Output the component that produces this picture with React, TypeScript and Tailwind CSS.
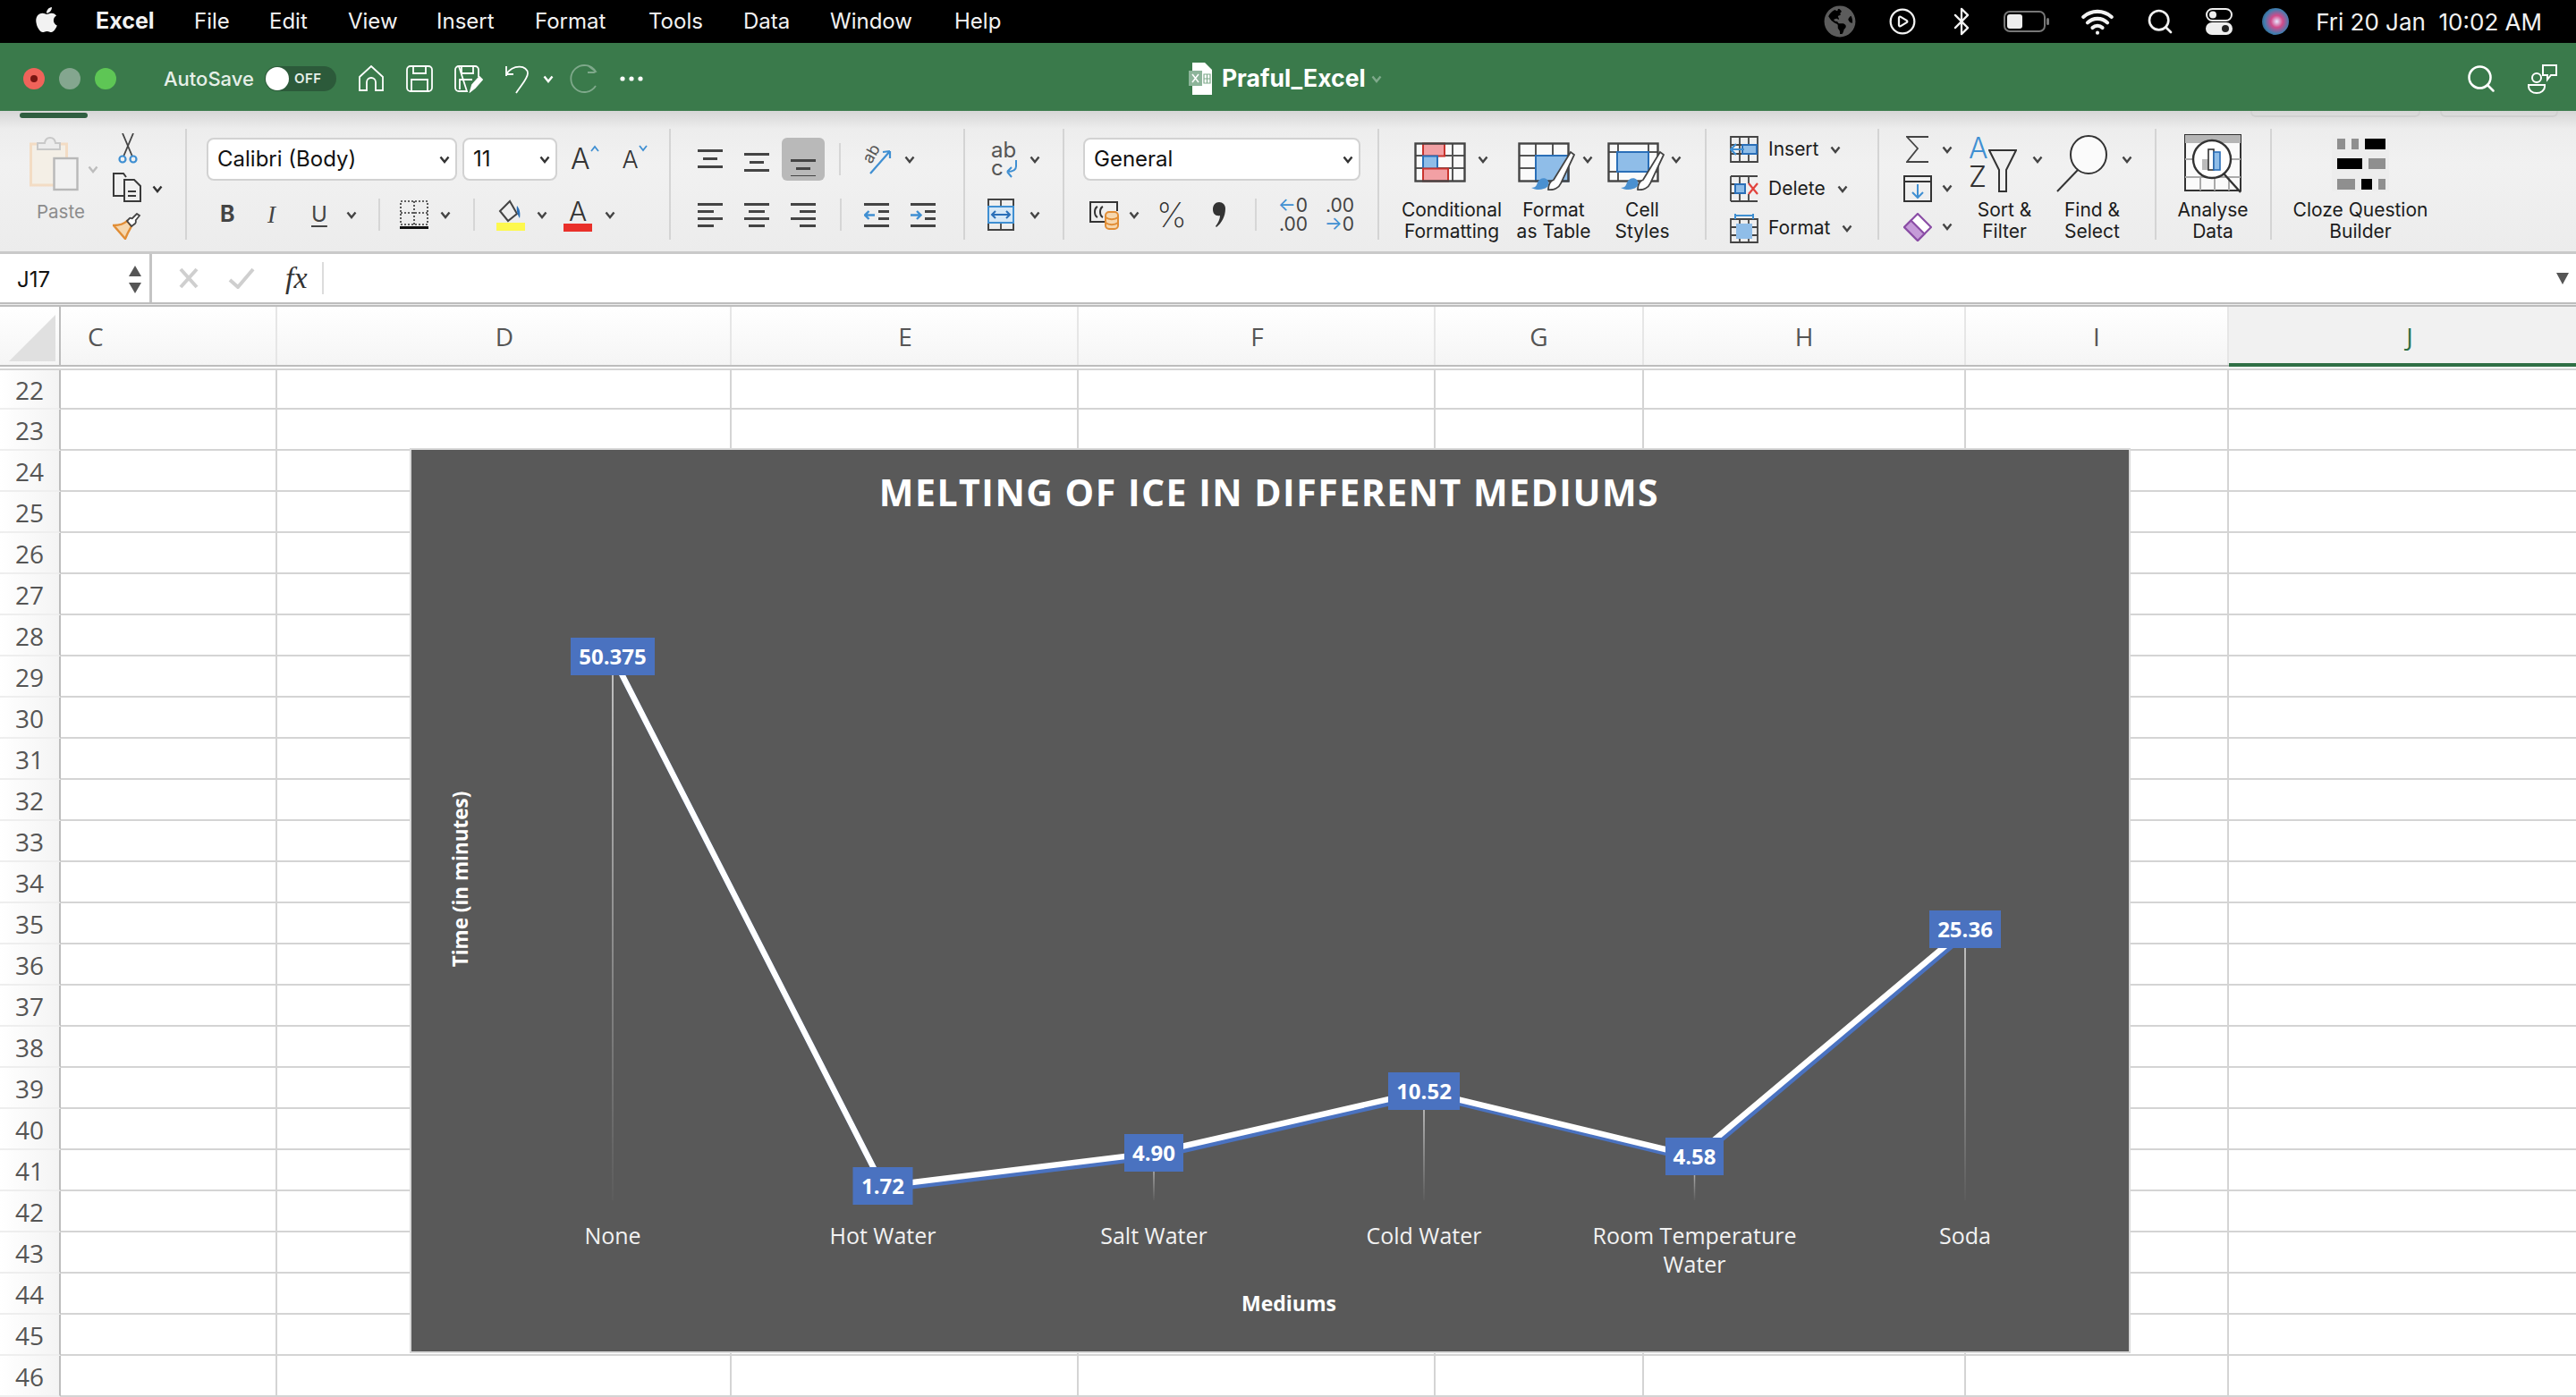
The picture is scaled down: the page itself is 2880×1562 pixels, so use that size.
import React from "react";
import { FaApple, FaGlobeAmericas } from "react-icons/fa";
import { Bluetooth, CirclePlay, Search, Wifi } from "lucide-react";

const menuItems = [
  { label: "File", width: "w-[84px]" },
  { label: "Edit", width: "w-[88px]" },
  { label: "View", width: "w-[99px]" },
  { label: "Insert", width: "w-[110px]" },
  { label: "Format", width: "w-[127px]" },
  { label: "Tools", width: "w-[106px]" },
  { label: "Data", width: "w-[97px]" },
  { label: "Window", width: "w-[139px]" },
  { label: "Help", width: "w-[60px]" },
];

const columns = [
  { label: "C", width: "w-[242px]", text: "pl-[30px] text-left" },
  { label: "D", width: "w-[508px]", text: "pl-[2px] text-center" },
  { label: "E", width: "w-[388px]", text: "pl-[2px] text-center" },
  { label: "F", width: "w-[399px]", text: "pl-[2px] text-center" },
  { label: "G", width: "w-[233px]", text: "text-center" },
  { label: "H", width: "w-[360px]", text: "text-center" },
  { label: "I", width: "w-[294px]", text: "text-center" },
];

const rows = Array.from({ length: 25 }, (_, i) => 22 + i);

const points = [
  { x: 685, y: 734, w: 94, value: "50.375", name: ["None"] },
  { x: 987, y: 1326, w: 67, value: "1.72", name: ["Hot Water"] },
  { x: 1290, y: 1289, w: 66, value: "4.90", name: ["Salt Water"] },
  { x: 1592, y: 1220, w: 80, value: "10.52", name: ["Cold Water"] },
  { x: 1894.5, y: 1293, w: 65, value: "4.58", name: ["Room Temperature", "Water"] },
  { x: 2197, y: 1039, w: 80, value: "25.36", name: ["Soda"] },
];

const chartFont = "'Open Sans', sans-serif";

function Chevron({ className = "", color = "#444444" }: { className?: string; color?: string }) {
  return (
    <svg width="12" height="9" viewBox="0 0 12 9" className={`shrink-0 ${className}`}>
      <path d="M1.5 1.5 6 7l4.5-5.5" fill="none" stroke={color} strokeWidth="2.4" />
    </svg>
  );
}

function Sep({ className = "" }: { className?: string }) {
  return <div className={`h-[36px] w-[2px] shrink-0 bg-[#d6d6d6] ${className}`} />;
}

function Lines({ rows, className = "" }: { rows: [number, number][]; className?: string }) {
  return (
    <svg width="28" height="28" viewBox="0 0 28 28" className={`shrink-0 ${className}`}>
      {rows.map(([x, y], i) => (
        <rect key={i} x={x} y={y} width={28 - x * 2 > 10 ? 28 - x * 2 : 16} height="3" fill="#444" />
      ))}
    </svg>
  );
}

function AlignH({ side, className = "" }: { side: "l" | "c" | "r"; className?: string }) {
  const short = side === "l" ? 0 : side === "c" ? 5 : 10;
  return (
    <svg width="28" height="28" viewBox="0 0 28 28" className={`shrink-0 ${className}`}>
      <rect y="1" width="28" height="3" fill="#444" />
      <rect x={short} y="9" width="18" height="3" fill="#444" />
      <rect y="17" width="28" height="3" fill="#444" />
      <rect x={short} y="25" width="18" height="3" fill="#444" />
    </svg>
  );
}

function Indent({ right, className = "" }: { right?: boolean; className?: string }) {
  return (
    <svg width="28" height="28" viewBox="0 0 28 28" className={`shrink-0 ${className}`}>
      <rect y="1" width="28" height="3" fill="#444" />
      <rect x="16" y="9" width="12" height="3" fill="#444" />
      <rect x="16" y="17" width="12" height="3" fill="#444" />
      <rect y="25" width="28" height="3" fill="#444" />
      {right ? (
        <path d="M0 14.500h11M7 10l4.500 4.500L7 19" fill="none" stroke="#3f8fd2" strokeWidth="2.4" />
      ) : (
        <path d="M12 14.500H1M5.500 10 1 14.500 5.500 19" fill="none" stroke="#3f8fd2" strokeWidth="2.4" />
      )}
    </svg>
  );
}

function MenuBar() {
  return (
    <div className="flex h-[48px] items-center bg-black font-['Inter',sans-serif] text-[24px] text-[#f2f2f2]">
      <FaApple className="ml-[38px] h-[32px] w-[28px] -translate-y-[2px]" />
      <span className="ml-[41px] w-[110px] text-[25px] font-bold">Excel</span>
      {menuItems.map((m) => (
        <span key={m.label} className={m.width}>
          {m.label}
        </span>
      ))}
      <div className="ml-auto flex items-center">
        <FaGlobeAmericas className="h-[36px] w-[36px] text-[#5c5c5c]" />
        <CirclePlay className="ml-[36px] h-[32px] w-[32px]" strokeWidth={1.7} />
        <Bluetooth className="ml-[33px] h-[34px] w-[34px]" strokeWidth={1.6} />
        <svg width="52" height="24" viewBox="0 0 52 24" className="ml-[30px]">
          <rect x="1" y="1" width="45" height="22" rx="6" fill="none" stroke="#777" strokeWidth="2" />
          <rect x="4" y="4" width="17" height="16" rx="3" fill="#eee" />
          <rect x="48" y="8" width="3" height="8" rx="1.500" fill="#777" />
        </svg>
        <Wifi className="ml-[34px] h-[38px] w-[38px]" strokeWidth={2.6} />
        <Search className="ml-[35px] h-[32px] w-[32px]" strokeWidth={2} />
        <svg width="30" height="30" viewBox="0 0 30 30" className="ml-[35px]">
          <rect x="1" y="1" width="28" height="13" rx="6.500" fill="none" stroke="#eee" strokeWidth="2" />
          <circle cx="8" cy="7.500" r="4" fill="#eee" />
          <rect x="0" y="16" width="30" height="14" rx="7" fill="#eee" />
          <circle cx="22" cy="23" r="4" fill="#222" />
        </svg>
        <div className="ml-[33px] h-[30px] w-[30px] rounded-full bg-[radial-gradient(circle_at_55%_50%,#e8e8ff_0%,#d04a8a_30%,#3f7fb0_62%,#222233_100%)]" />
        <span className="ml-[30px] mr-[38px] whitespace-pre text-[26px]">Fri 20 Jan  10:02 AM</span>
      </div>
    </div>
  );
}

function TitleBar() {
  return (
    <div className="flex h-[76px] items-center bg-[#3a7a4b] pt-[4px] font-['Inter',sans-serif] text-white">
      <div className="relative ml-[26px] flex h-[24px] w-[24px] items-center justify-center rounded-full bg-[#f0635a]">
        <div className="h-[8px] w-[8px] rounded-full bg-[#7a1512]" />
      </div>
      <div className="ml-[16px] h-[24px] w-[24px] rounded-full bg-[#84a68f]" />
      <div className="ml-[16px] h-[24px] w-[24px] rounded-full bg-[#5ec655]" />
      <span className="ml-[53px] text-[22px] font-medium text-[#e6efe8]">AutoSave</span>
      <div className="ml-[12px] flex h-[28px] w-[80px] items-center rounded-full bg-[#2c5a3a] pl-[1px]">
        <div className="h-[26px] w-[26px] rounded-full bg-white" />
        <span className="ml-[6px] text-[15px] font-semibold tracking-[0.5px] text-[#e6efe8]">OFF</span>
      </div>
      <svg width="30" height="30" viewBox="0 0 30 30" className="ml-[24px]" fill="none" stroke="#fff" strokeWidth="1.800">
        <path d="M2 13 15 1l13 12v15h-8v-9a5 5 0 0 0-10 0v9H2z" />
      </svg>
      <svg width="30" height="30" viewBox="0 0 30 30" className="ml-[24px]" fill="none" stroke="#fff" strokeWidth="1.800">
        <path d="M5 1h20a4 4 0 0 1 4 4v20a4 4 0 0 1-4 4H5a4 4 0 0 1-4-4V5a4 4 0 0 1 4-4z" />
        <path d="M8 1v8h14V1M6 29V16h18v13" />
      </svg>
      <svg width="32" height="32" viewBox="0 0 32 32" className="ml-[24px]" fill="none" stroke="#fff" strokeWidth="1.800">
        <path d="M5 2h18a4 4 0 0 1 4 4v8M14 30H5a4 4 0 0 1-4-4V6a4 4 0 0 1 4-4z" />
        <path d="M8 2v8h13V2M6 28V17h14" />
        <path d="M18 30l2-7 8-9 3 3-8 9z" fill="#fff" />
      </svg>
      <svg width="28" height="34" viewBox="0 0 28 34" className="ml-[24px]" fill="none" stroke="#fff" strokeWidth="1.800">
        <path d="M2 14V3M2 12h8M2 12C10 0 26 2 26 11c0 6-8 14-13 22" />
      </svg>
      <Chevron className="ml-[15px]" color="#ffffff" />
      <svg width="32" height="34" viewBox="0 0 32 34" className="ml-[17px]" fill="none" stroke="#7fa98b" strokeWidth="1.800">
        <path d="M30 9A15 15 0 1 0 30 25M21 2l9 7-2 1h-7" />
      </svg>
      <svg width="26" height="6" viewBox="0 0 26 6" className="ml-[25px]" fill="#fff">
        <circle cx="3" cy="3" r="2.600" />
        <circle cx="13" cy="3" r="2.600" />
        <circle cx="23" cy="3" r="2.600" />
      </svg>
      <div className="ml-[610px] flex items-center">
        <svg width="26" height="36" viewBox="0 0 26 36">
          <path d="M4 0h14l8 8v28H4z" fill="#fff" />
          <rect x="0" y="9" width="15" height="17" fill="#8db49a" />
          <path d="M4 13l7 9m0-9-7 9" stroke="#fff" strokeWidth="1.500" />
          <path d="M17 13h7v10h-7zM20.500 13v10M17 18h7" fill="none" stroke="#7fa98b" strokeWidth="1.200" />
        </svg>
        <span className="ml-[11px] text-[26.500px] font-bold">Praful_Excel</span>
        <Chevron className="ml-[6px]" color="#7fa98b" />
      </div>
      <Search className="ml-auto h-[36px] w-[36px]" strokeWidth={1.700} />
      <svg width="34" height="34" viewBox="0 0 34 34" className="ml-[34px] mr-[20px]" fill="none" stroke="#fff" strokeWidth="2">
        <circle cx="10" cy="16" r="5" />
        <path d="M1 24h18v2a9 7 0 0 1-18 0z" />
        <path d="M17 2h15v11h-6l-4 5v-5h-5z" />
      </svg>
    </div>
  );
}

function SelectBox({ label, className }: { label: string; className: string }) {
  return (
    <div className={`flex h-[48px] shrink-0 items-center justify-between rounded-[8px] border-2 border-[#d2d2d2] bg-white pl-[10px] pr-[6px] text-[24px] text-[#111] ${className}`}>
      <span>{label}</span>
      <Chevron color="#333333" />
    </div>
  );
}

function BigLabel({ lines, className }: { lines: string[]; className: string }) {
  return (
    <div className={`absolute top-[79px] -translate-x-1/2 whitespace-nowrap text-center text-[21px] leading-[24px] text-[#1c1c1c] ${className}`}>
      {lines.map((l) => (
        <div key={l}>{l}</div>
      ))}
    </div>
  );
}

function GridIcon({ children, width = 58, height = 46, cols, rowsY }: { children?: React.ReactNode; width?: number; height?: number; cols: number[]; rowsY: number[] }) {
  return (
    <svg width={width} height={height} viewBox={`0 0 ${width} ${height}`} className="shrink-0" fill="none">
      <rect x="1.500" y="1.500" width="55" height="42" fill="#fafafa" />
      {cols.map((c) => (
        <path key={c} d={`M${c} 1.500V43.500`} stroke="#555" strokeWidth="2" />
      ))}
      {rowsY.map((r) => (
        <path key={r} d={`M1.500 ${r}H56.500`} stroke="#555" strokeWidth="2" />
      ))}
      {children}
      <rect x="1.500" y="1.500" width="55" height="42" stroke="#444" strokeWidth="2.400" />
    </svg>
  );
}

function Brush() {
  return (
    <g>
      <path d="M34 52c0-4 1-9 6-11l19-31 4 3-15 32c-2 5-8 8-14 7z" fill="#fff" stroke="#444" strokeWidth="1.800" />
      <path d="M15 50c5 0 6-3 7-6 2-5 8-6 11-3 3 4 1 9-4 10-5 2-10 1-14-1z" fill="#4a90d0" />
    </g>
  );
}

function Ribbon() {
  const group = "relative flex h-[124px] shrink-0 flex-col gap-[14px] border-r-2 border-[#d4d4d4] pt-[10px]";
  const row = "flex h-[48px] items-center";
  return (
    <div className="relative flex h-[160px] border-b-[3px] border-[#c9c9c9] bg-[linear-gradient(#d6d6d6_0px,#ededed_20px,#f1f1f1_60px,#ececec_100%)] pt-[20px] font-['Inter',sans-serif] text-[#1c1c1c]">
      <div className="absolute left-[22px] top-[2px] h-[6px] w-[76px] rounded-[3px] bg-[#2f5e40]" />
      <div className="absolute left-[2516px] top-0 h-[7px] w-[190px] rounded-b-[6px] border-x-2 border-b-2 border-[#d0d0d0]" />
      <div className="absolute left-[2728px] top-0 h-[7px] w-[132px] rounded-b-[6px] border-x-2 border-b-2 border-[#d0d0d0]" />

      {/* clipboard */}
      <div className={`${group} w-[209px]`}>
        <svg width="56" height="62" viewBox="0 0 56 62" className="absolute left-[33px] top-[8px]" fill="none">
          <rect x="1.500" y="9" width="40" height="46" stroke="#f3dcc4" strokeWidth="3" fill="#f4efe6" />
          <path d="M9 15V8h8c1-8 11-8 12 0h5v7z" fill="#ececec" stroke="#c8c8c8" strokeWidth="2" />
          <rect x="27.500" y="25" width="26" height="35" fill="#f1f1f1" stroke="#b8b8b8" strokeWidth="2.400" />
        </svg>
        <Chevron className="absolute left-[98px] top-[41px]" color="#bdbdbd" />
        <span className="absolute left-[41px] top-[78px] text-[20.500px] text-[#8c8c8c]">Paste</span>
        <svg width="22" height="34" viewBox="0 0 22 34" className="absolute left-[132px] top-[5px]" fill="none">
          <path d="M5 0l11 26M17 0 6 26" stroke="#444" strokeWidth="1.800" />
          <circle cx="5" cy="29" r="3.500" stroke="#3f8fd2" strokeWidth="2.200" />
          <circle cx="17" cy="29" r="3.500" stroke="#3f8fd2" strokeWidth="2.200" />
        </svg>
        <svg width="32" height="34" viewBox="0 0 32 34" className="absolute left-[126px] top-[49px]" fill="none" stroke="#3a3a3a" strokeWidth="2">
          <path d="M14 26H1V1h11l3 4" />
          <path d="M13 8h11l7 7v17H13zM17 21h9M17 26h9" />
        </svg>
        <Chevron className="absolute left-[170px] top-[63px]" color="#333333" />
        <svg width="32" height="30" viewBox="0 0 32 30" className="absolute left-[126px] top-[94px]" fill="none">
          <path d="M1 14c8 0 12-2 15-5l5 6c-3 5-5 9-7 14z" fill="#f6d7ae" stroke="#e18d35" strokeWidth="2.400" />
          <path d="M16 9l5 6 4-3c2-2 0-3 1-4l4-5-3-2-5 5c-1 1-2-1-3 0z" fill="#fff" stroke="#444" strokeWidth="1.800" />
        </svg>
      </div>

      {/* font */}
      <div className={`${group} w-[541px]`}>
        <div className={row}>
          <SelectBox label="Calibri (Body)" className="ml-[22px] w-[280px]" />
          <SelectBox label="11" className="ml-[6px] w-[106px]" />
          <span className="ml-[15px] text-[32px] font-light leading-none text-[#333]">A</span>
          <svg width="10" height="8" viewBox="0 0 10 8" className="-translate-y-[12px]"><path d="M1 7l4-5 4 5" fill="none" stroke="#3f8fd2" strokeWidth="1.800" /></svg>
          <span className="ml-[26px] text-[27px] font-light leading-none text-[#333]">A</span>
          <svg width="10" height="8" viewBox="0 0 10 8" className="-translate-y-[12px]"><path d="M1 1l4 5 4-5" fill="none" stroke="#3f8fd2" strokeWidth="1.800" /></svg>
        </div>
        <div className={row}>
          <span className="ml-[37px] w-[20px] text-[25px] font-bold text-[#444]">B</span>
          <span className="ml-[33px] w-[14px] font-['Liberation_Serif',serif] text-[27px] italic text-[#444]">I</span>
          <span className="ml-[35px] w-[20px] text-[24px] text-[#444] underline underline-offset-[4px]">U</span>
          <Chevron className="ml-[19px]" />
          <Sep className="ml-[24px]" />
          <svg width="32" height="32" viewBox="0 0 32 32" className="ml-[22px] shrink-0" fill="none">
            <path d="M1 1h30v26H1zM16 1v26M1 14h30" stroke="#333" strokeWidth="1.600" strokeDasharray="2 2" />
            <path d="M0 30.500h32" stroke="#111" strokeWidth="3" />
          </svg>
          <Chevron className="ml-[13px]" />
          <Sep className="ml-[25px]" />
          <svg width="32" height="36" viewBox="0 0 32 36" className="ml-[24px] shrink-0" fill="none">
            <path d="M4 14 15 3l8 14-10 8z" stroke="#444" strokeWidth="2" />
            <path d="M23 8c3 4 4 8 3 14-2-3-4-8-3-14z" fill="#2a6fb8" />
            <rect x="0" y="27" width="32" height="9" fill="#fdf84e" />
          </svg>
          <Chevron className="ml-[13px]" />
          <div className="ml-[18px] flex w-[32px] shrink-0 flex-col items-center">
            <span className="h-[27px] text-[30px] font-light leading-[28px] text-[#333]">A</span>
            <div className="mt-[1px] h-[9px] w-[32px] bg-[#e9302a]" />
          </div>
          <Chevron className="ml-[14px]" />
        </div>
      </div>

      {/* alignment */}
      <div className={`${group} w-[329px]`}>
        <div className={row}>
          <Lines rows={[[0, 3], [6, 12], [0, 21]]} className="ml-[30px]" />
          <Lines rows={[[0, 7], [6, 16], [0, 25]]} className="ml-[24px]" />
          <div className="ml-[14px] flex h-[48px] w-[48px] shrink-0 items-center justify-center rounded-[6px] bg-[#b9b9b9]">
            <Lines rows={[[0, 9], [6, 18], [0, 27]]} className="translate-y-[5px]" />
          </div>
          <Sep className="ml-[16px]" />
          <svg width="36" height="38" viewBox="0 0 36 38" className="ml-[22px] shrink-0" fill="none">
            <path d="M11 35 33 10m0 0-8 1m8-1 0 8" stroke="#3f8fd2" strokeWidth="2.200" />
            <text transform="translate(12 25) rotate(-60)" fontSize="18" fontFamily="Inter, sans-serif" fill="#555">ab</text>
          </svg>
          <Chevron className="ml-[13px]" />
        </div>
        <div className={row}>
          <AlignH side="l" className="ml-[30px]" />
          <AlignH side="c" className="ml-[24px]" />
          <AlignH side="r" className="ml-[24px]" />
          <Sep className="ml-[27px]" />
          <Indent className="ml-[25px]" />
          <Indent right className="ml-[24px]" />
        </div>
      </div>

      {/* wrap / merge */}
      <div className={`${group} w-[111px]`}>
        <div className={row}>
          <div className="ml-[29px] flex w-[30px] shrink-0 flex-col text-[24px] leading-[20px] text-[#555]">
            <span>ab</span>
            <span className="relative">
              c
              <svg width="18" height="22" viewBox="0 0 18 22" className="absolute left-[13px] top-0" fill="none">
                <path d="M15 1v7c0 4-3 6-10 6m0 0 5-5m-5 5 5 6" stroke="#3f8fd2" strokeWidth="2" />
              </svg>
            </span>
          </div>
          <Chevron className="ml-[13px]" />
        </div>
        <div className={row}>
          <svg width="30" height="36" viewBox="0 0 30 36" className="ml-[25px] shrink-0" fill="none">
            <rect x="1" y="1" width="28" height="34" stroke="#444" strokeWidth="2" />
            <path d="M1 9h28M1 27h28M15 1v8M15 27v8" stroke="#444" strokeWidth="1.800" />
            <rect x="1" y="9" width="28" height="18" fill="#d6e8f7" stroke="#3f8fd2" strokeWidth="2" />
            <path d="M5 18h20M9 14l-4 4 4 4M21 14l4 4-4 4" stroke="#2a6fb8" strokeWidth="2" />
          </svg>
          <Chevron className="ml-[17px]" />
        </div>
      </div>

      {/* number */}
      <div className={`${group} w-[352px]`}>
        <div className={row}>
          <SelectBox label="General" className="ml-[21px] w-[310px]" />
        </div>
        <div className={row}>
          <svg width="34" height="34" viewBox="0 0 34 34" className="ml-[28px] shrink-0" fill="none">
            <path d="M18 25H1V3h30v10" stroke="#333" strokeWidth="2" />
            <path d="M9 8c-4 2-4 10 0 12M15 8c-4 2-4 10 0 12" stroke="#333" strokeWidth="2" />
            <rect x="18" y="14" width="14" height="19" rx="4" fill="#f6d7ae" stroke="#e18d35" strokeWidth="2" />
            <path d="M18 20c4 3 10 3 14 0M18 26c4 3 10 3 14 0" stroke="#e18d35" strokeWidth="2" />
          </svg>
          <Chevron className="ml-[10px]" />
          <span className="ml-[19px] w-[34px] text-[38px] font-extralight leading-none text-[#333]">%</span>
          <svg width="16" height="30" viewBox="0 0 16 30" className="ml-[28px] shrink-0">
            <path d="M8 1c4 0 7 3 7 7 0 9-4 16-10 21l-1-1c3-4 5-8 5-12-5 1-8-2-8-7 0-5 3-8 7-8z" fill="#333" />
          </svg>
          <Sep className="ml-[32px]" />
          <div className="ml-[23px] w-[34px] shrink-0 text-right text-[21px] leading-[21px] text-[#444]">
            <div><span className="text-[#3f8fd2]">←</span>0</div>
            <div>.00</div>
          </div>
          <div className="ml-[18px] w-[34px] shrink-0 text-right text-[21px] leading-[21px] text-[#444]">
            <div>.00</div>
            <div><span className="text-[#3f8fd2]">→</span>0</div>
          </div>
        </div>
      </div>

      {/* styles */}
      <div className={`${group} w-[366px]`}>
        <div className="absolute left-[39px] top-[15px]">
          <GridIcon cols={[11, 43]} rowsY={[15, 29]}>
            <rect x="10" y="1.500" width="24" height="14" fill="#f2a0a4" stroke="#c9342e" strokeWidth="2" />
            <rect x="10" y="15.500" width="16" height="14" fill="#8fbde8" stroke="#2a6fb8" strokeWidth="2" />
            <rect x="10" y="29.500" width="28" height="14" fill="#f2a0a4" stroke="#c9342e" strokeWidth="2" />
          </GridIcon>
        </div>
        <Chevron className="absolute left-[110px] top-[30px]" />
        <div className="absolute left-[155px] top-[15px]">
          <svg width="66" height="54" viewBox="0 0 66 54" fill="none">
            <rect x="1.500" y="1.500" width="55" height="42" fill="#fafafa" />
            <path d="M20 1.500V43.500M39 1.500V43.500M1.500 15H56.500M1.500 29H56.500" stroke="#555" strokeWidth="2" />
            <rect x="20" y="15" width="36.500" height="28.500" fill="#8fbde8" stroke="#2a6fb8" strokeWidth="2" />
            <rect x="1.500" y="1.500" width="55" height="42" stroke="#444" strokeWidth="2.400" />
            <g transform="translate(0 1)"><Brush /></g>
          </svg>
        </div>
        <Chevron className="absolute left-[227px] top-[30px]" />
        <div className="absolute left-[255px] top-[15px]">
          <svg width="66" height="54" viewBox="0 0 66 54" fill="none">
            <rect x="1.500" y="1.500" width="55" height="42" fill="#fafafa" />
            <path d="M12 1.500V43.500M46 1.500V43.500M1.500 11H56.500M1.500 33H56.500" stroke="#555" strokeWidth="2" />
            <rect x="11" y="11" width="35" height="22" fill="#8fbde8" stroke="#2a6fb8" strokeWidth="2" />
            <rect x="1.500" y="1.500" width="55" height="42" stroke="#444" strokeWidth="2.400" />
            <g transform="translate(0 1)"><Brush /></g>
          </svg>
        </div>
        <Chevron className="absolute left-[326px] top-[30px]" />
        <BigLabel lines={["Conditional", "Formatting"]} className="left-[81px]" />
        <BigLabel lines={["Format", "as Table"]} className="left-[195px]" />
        <BigLabel lines={["Cell", "Styles"]} className="left-[294px]" />
      </div>

      {/* cells */}
      <div className="relative flex h-[124px] w-[193px] shrink-0 flex-col gap-[14px] border-r-2 border-[#d4d4d4] pl-[26px] pt-[8px] text-[21px]">
        <div className="flex h-[30px] items-center">
          <svg width="32" height="30" viewBox="0 0 32 30" className="shrink-0" fill="none">
            <path d="M1 1h30v28H1zM11 1v28M21 1v28M1 10h30M1 20h30" stroke="#444" strokeWidth="1.800" />
            <rect x="14" y="10" width="16" height="10" fill="#8fbde8" stroke="#2a6fb8" strokeWidth="2" />
            <path d="M16 15H2M7 9l-6 6 6 6" stroke="#3f8fd2" strokeWidth="2.200" />
          </svg>
          <span className="ml-[11px]">Insert</span>
          <Chevron className="ml-[13px]" />
        </div>
        <div className="flex h-[30px] items-center">
          <svg width="32" height="30" viewBox="0 0 32 30" className="shrink-0" fill="none">
            <path d="M1 1h30M1 29h30M1 1v28M11 1v28M21 1v8M21 21v8M1 10h10M1 20h10" stroke="#444" strokeWidth="1.800" />
            <rect x="6" y="10" width="11" height="10" fill="#8fbde8" stroke="#2a6fb8" strokeWidth="2" />
            <path d="M21 9l10 12m0-12L21 21" stroke="#e2423c" strokeWidth="2.200" />
          </svg>
          <span className="ml-[11px]">Delete</span>
          <Chevron className="ml-[13px]" />
        </div>
        <div className="flex h-[30px] items-center">
          <svg width="32" height="34" viewBox="0 0 32 34" className="shrink-0" fill="none">
            <path d="M1 7h30v26H1zM11 7v26M21 7v26M1 16h30M1 25h30" stroke="#444" strokeWidth="1.800" />
            <rect x="11" y="16" width="10" height="9" fill="#8fbde8" stroke="#8fbde8" strokeWidth="8" />
            <path d="M6 1v6M26 1v6M6 3h20" stroke="#3f8fd2" strokeWidth="2" />
          </svg>
          <span className="ml-[11px]">Format</span>
          <Chevron className="ml-[13px]" />
        </div>
      </div>

      {/* editing */}
      <div className="relative h-[124px] w-[310px] shrink-0 border-r-2 border-[#d4d4d4]">
        <svg width="26" height="30" viewBox="0 0 26 30" className="absolute left-[30px] top-[8px]" fill="none">
          <path d="M25 1H1l12 13L1 29h24" stroke="#444" strokeWidth="1.800" />
        </svg>
        <Chevron className="absolute left-[70px] top-[19px]" />
        <svg width="32" height="30" viewBox="0 0 32 30" className="absolute left-[27px] top-[52px]" fill="none">
          <rect x="1" y="1" width="30" height="28" stroke="#333" strokeWidth="2" />
          <path d="M1 7h30" stroke="#333" strokeWidth="2" />
          <path d="M16 10v15m-6-6 6 6 6-6" stroke="#3f8fd2" strokeWidth="2" />
        </svg>
        <Chevron className="absolute left-[70px] top-[62px]" />
        <svg width="32" height="32" viewBox="0 0 32 32" className="absolute left-[27px] top-[94px]" fill="none">
          <path d="M16 1l15 15-15 15L1 16z" fill="#fff" stroke="#8b4ea6" strokeWidth="2.200" />
          <path d="M8.500 8.500 23.500 23.500 16 31 1 16z" fill="#c59bd8" stroke="#8b4ea6" strokeWidth="2.200" />
        </svg>
        <Chevron className="absolute left-[70px] top-[105px]" />

        <span className="absolute left-[100px] top-[6px] text-[32px] font-light leading-none text-[#3f8fd2]">A</span>
        <span className="absolute left-[100px] top-[38px] text-[32px] font-light leading-none text-[#333]">Z</span>
        <svg width="32" height="60" viewBox="0 0 32 60" className="absolute left-[122px] top-[22px]" fill="none">
          <path d="M1 2h30L20 24v24h-8V24z" stroke="#333" strokeWidth="2" />
        </svg>
        <Chevron className="absolute left-[171px] top-[30px]" />
        <svg width="58" height="64" viewBox="0 0 58 64" className="absolute left-[198px] top-[7px]" fill="none">
          <ellipse cx="36" cy="22" rx="20" ry="21" fill="#fbfbfb" stroke="#333" strokeWidth="2" />
          <path d="M24 39 1 63" stroke="#333" strokeWidth="2" />
        </svg>
        <Chevron className="absolute left-[271px] top-[30px]" />
        <BigLabel lines={["Sort &", "Filter"]} className="left-[140px]" />
        <BigLabel lines={["Find &", "Select"]} className="left-[238px]" />
      </div>

      {/* analyse */}
      <div className="relative h-[124px] w-[129px] shrink-0 border-r-2 border-[#d4d4d4]">
        <svg width="64" height="66" viewBox="0 0 64 66" className="absolute left-[31px] top-[6px]" fill="none">
          <rect x="1" y="1" width="62" height="62" fill="#fafafa" stroke="#333" strokeWidth="2" />
          <rect x="1" y="1" width="62" height="9" fill="#b5b5b5" />
          <path d="M1 28h62M1 48h62M18 48v15M34 48v15M50 48v15" stroke="#aaa" strokeWidth="2" />
          <circle cx="31" cy="28" r="21" fill="#fff" stroke="#333" strokeWidth="2.400" />
          <rect x="20" y="28" width="8" height="12" fill="#bbb" />
          <rect x="27" y="17" width="6" height="23" fill="#fff" stroke="#333" strokeWidth="1.600" />
          <rect x="33" y="20" width="7" height="20" fill="#8fbde8" stroke="#2a6fb8" strokeWidth="1.600" />
          <path d="M44 44l19 21" stroke="#333" strokeWidth="2.400" />
        </svg>
        <BigLabel lines={["Analyse", "Data"]} className="left-[63px]" />
      </div>

      {/* add-in */}
      <div className="relative h-[124px] grow">
        <div className="absolute left-[67px] top-[6px] flex h-[64px] w-[64px] flex-col gap-[10px] bg-[#ededed] pl-[6px] pt-[5px]">
          <div className="flex gap-[7px]"><div className="h-[12px] w-[9px] bg-[#8f8f8f]" /><div className="h-[12px] w-[8px] bg-[#8f8f8f]" /><div className="h-[12px] w-[23px] bg-black" /></div>
          <div className="flex gap-[7px]"><div className="h-[12px] w-[28px] bg-black" /><div className="h-[12px] w-[19px] bg-[#8f8f8f]" /></div>
          <div className="mt-[1px] flex gap-[7px]"><div className="h-[12px] w-[20px] bg-[#8f8f8f]" /><div className="h-[12px] w-[12px] bg-black" /><div className="h-[12px] w-[8px] bg-[#8f8f8f]" /></div>
        </div>
        <BigLabel lines={["Cloze Question", "Builder"]} className="left-[99px]" />
      </div>
    </div>
  );
}

function FormulaBar() {
  return (
    <>
      <div className="flex h-[54px] bg-white font-['Inter',sans-serif]">
        <div className="flex w-[170px] items-center justify-between border-r-[3px] border-[#c4c4c4] pl-[19px] pr-[9px] pt-[3px] text-[24px] text-[#111]">
          <span>J17</span>
          <div className="flex flex-col gap-[7px]">
            <div className="h-0 w-0 border-x-[7px] border-b-[12px] border-x-transparent border-b-[#555]" />
            <div className="h-0 w-0 border-x-[7px] border-t-[12px] border-x-transparent border-t-[#555]" />
          </div>
        </div>
        <div className="flex grow items-center">
          <svg width="24" height="24" viewBox="0 0 24 24" className="ml-[29px]"><path d="M3 2l18 20M21 2 3 22" stroke="#cfcfcf" strokeWidth="4" /></svg>
          <svg width="30" height="24" viewBox="0 0 30 24" className="ml-[32px]"><path d="M2 14l9 8L28 2" fill="none" stroke="#cfcfcf" strokeWidth="4" /></svg>
          <span className="ml-[34px] w-[28px] font-['Liberation_Serif',serif] text-[34px] italic leading-none text-[#333]">fx</span>
          <div className="ml-[13px] h-[36px] w-[2px] bg-[#dcdcdc]" />
          <div className="ml-auto mr-[8px] h-0 w-0 border-x-[7px] border-t-[13px] border-x-transparent border-t-[#555]" />
        </div>
      </div>
      <div className="h-[5px] border-y-2 border-[#bdbdbd] bg-[#ededed]" />
    </>
  );
}

function MeltingChart() {
  const line = points.map((p) => `${p.x},${p.y}`).join(" ");
  const shadow = points.map((p) => `${p.x + 2},${p.y + 4}`).join(" ");
  return (
    <div className="absolute left-[458px] top-[158px] h-[1012px] w-[1924px] border-2 border-[#d9d9d9] bg-[#595959]">
      <svg width="1920" height="1008" viewBox="460 503 1920 1008" className="block">
        <defs>
          <linearGradient id="leader" x1="0" y1="0" x2="0" y2="1">
            <stop offset="0" stopColor="#ffffff" stopOpacity="0.85" />
            <stop offset="1" stopColor="#ffffff" stopOpacity="0.03" />
          </linearGradient>
        </defs>
        {points.map((p) => (
          <rect key={p.value} x={p.x - 0.750} y={p.y} width="1.500" height={1342 - p.y} fill="url(#leader)" />
        ))}
        <polyline points={shadow} fill="none" stroke="#4a72c0" strokeWidth="6.500" />
        <polyline points={line} fill="none" stroke="#ffffff" strokeWidth="6.500" />
        <text x="1419" y="550" textAnchor="middle" dominantBaseline="central" fontFamily={chartFont} fontWeight="700" fontSize="41" letterSpacing="1.500" fill="#fff">
          MELTING OF ICE IN DIFFERENT MEDIUMS
        </text>
        <text transform="translate(514 983) rotate(-90)" textAnchor="middle" dominantBaseline="central" fontFamily={chartFont} fontWeight="700" fontSize="22.500" fill="#fff">
          Time (in minutes)
        </text>
        <text x="1441" y="1457" textAnchor="middle" dominantBaseline="central" fontFamily={chartFont} fontWeight="700" fontSize="23" fill="#fff">
          Mediums
        </text>
        {points.map((p) => (
          <g key={p.value + "-label"}>
            <rect x={p.x - p.w / 2} y={p.y - 21} width={p.w} height="42" fill="#4a72c0" />
            <text x={p.x} y={p.y - 1} textAnchor="middle" dominantBaseline="central" fontFamily={chartFont} fontWeight="700" fontSize="24" fill="#fff">
              {p.value}
            </text>
            {p.name.map((n, i) => (
              <text key={n} x={p.x} y={1381 + i * 32} textAnchor="middle" dominantBaseline="central" fontFamily={chartFont} fontWeight="500" fontSize="25" fill="#f2f2f2">
                {n}
              </text>
            ))}
          </g>
        ))}
      </svg>
    </div>
  );
}

function Sheet() {
  return (
    <div className="relative font-['Open_Sans',sans-serif] text-[28px] text-[#555]">
      <div className="flex h-[67px] border-b-2 border-[#bdbdbd] bg-[linear-gradient(#ffffff,#f5f5f5)]">
        <div className="relative w-[68px] shrink-0 border-r-2 border-[#bdbdbd]">
          <div className="absolute bottom-[4px] right-[4px] h-[52px] w-[52px] bg-[#e0e0e0] [clip-path:polygon(100%_0,100%_100%,0_100%)]" />
        </div>
        {columns.map((c) => (
          <div key={c.label} className={`${c.width} ${c.text} shrink-0 border-r-2 border-[#e6e6e6] pt-[8px] leading-[50px]`}>
            {c.label}
          </div>
        ))}
        <div className="-mb-[2px] grow border-b-4 border-[#2f6f45] bg-[#f1f1f1] pl-[16px] pt-[8px] text-center leading-[50px] text-[#2f6f45]">J</div>
      </div>
      <div className="h-[2px] bg-white" />
      <div className="h-[2px] bg-[#d4d4d4]" />
      {rows.map((r) => (
        <div key={r} className={`flex ${r === 22 ? "h-[44px]" : "h-[46px]"}`}>
          <div className="flex w-[68px] shrink-0 items-center justify-center border-r-2 border-b-2 border-r-[#bdbdbd] border-b-[#eeeeee] bg-[linear-gradient(90deg,#ffffff,#f4f4f4)] pt-[2px] leading-none">
            {r}
          </div>
          {columns.map((c) => (
            <div key={c.label} className={`${c.width} shrink-0 border-r-2 border-b-2 border-[#d4d4d4] bg-white`} />
          ))}
          <div className="grow border-b-2 border-[#d4d4d4] bg-white" />
        </div>
      ))}
      <MeltingChart />
    </div>
  );
}

export default function App() {
  return (
    <div className="h-[1562px] w-[2880px] overflow-hidden bg-white">
      <MenuBar />
      <TitleBar />
      <Ribbon />
      <FormulaBar />
      <Sheet />
    </div>
  );
}
